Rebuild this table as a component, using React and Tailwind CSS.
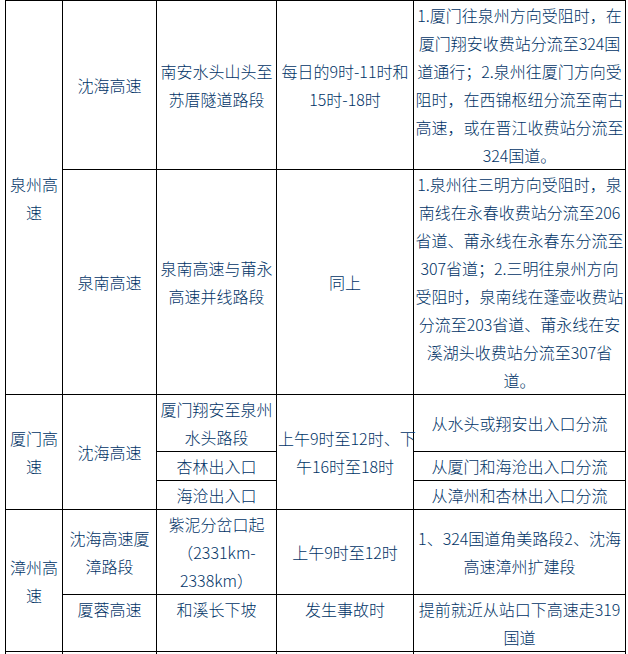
import React from "react";

const td =
  "border border-black px-px py-0 text-center align-middle leading-[28px]";
const tdTop =
  "border border-black px-px py-0 text-center align-top leading-[28px]";

function Lines({ lines }) {
  return (
    <>
      {lines.map((l, i) => (
        <div key={i} className="whitespace-nowrap">
          {l}
        </div>
      ))}
    </>
  );
}

export default function App() {
  return (
    <div className="bg-white w-[628px] h-[654px] overflow-hidden">
      <table
        className="ml-[5px] w-[620px] table-fixed border-collapse text-[16px] font-light text-[#003366]"
        style={{ fontFamily: '"Noto Sans CJK SC", sans-serif' }}
      >
        <colgroup>
          <col className="w-[57px]" />
          <col className="w-[94px]" />
          <col className="w-[120px]" />
          <col className="w-[137px]" />
          <col className="w-[212px]" />
        </colgroup>
        <tbody>
          <tr>
            <td className={td} rowSpan={2}>
              泉州高速
            </td>
            <td className={td}>沈海高速</td>
            <td className={td}>
              <Lines lines={["南安水头山头至", "苏厝隧道路段"]} />
            </td>
            <td className={td}>
              <Lines lines={["每日的9时-11时和", "15时-18时"]} />
            </td>
            <td className={td}>
              <Lines
                lines={[
                  "1.厦门往泉州方向受阻时，在",
                  "厦门翔安收费站分流至324国",
                  "道通行；2.泉州往厦门方向受",
                  "阻时，在西锦枢纽分流至南古",
                  "高速，或在晋江收费站分流至",
                  "324国道。",
                ]}
              />
            </td>
          </tr>
          <tr>
            <td className={td}>泉南高速</td>
            <td className={td}>
              <Lines lines={["泉南高速与莆永", "高速并线路段"]} />
            </td>
            <td className={td}>同上</td>
            <td className={td}>
              <Lines
                lines={[
                  "1.泉州往三明方向受阻时，泉",
                  "南线在永春收费站分流至206",
                  "省道、莆永线在永春东分流至",
                  "307省道；2.三明往泉州方向",
                  "受阻时，泉南线在蓬壶收费站",
                  "分流至203省道、莆永线在安",
                  "溪湖头收费站分流至307省",
                  "道。",
                ]}
              />
            </td>
          </tr>
          <tr>
            <td className={td} rowSpan={3}>
              厦门高速
            </td>
            <td className={td} rowSpan={3}>
              沈海高速
            </td>
            <td className={td}>
              <Lines lines={["厦门翔安至泉州", "水头路段"]} />
            </td>
            <td className={td} rowSpan={3}>
              <Lines lines={["上午9时至12时、下", "午16时至18时"]} />
            </td>
            <td className={td}>从水头或翔安出入口分流</td>
          </tr>
          <tr>
            <td className={td}>杏林出入口</td>
            <td className={td}>从厦门和海沧出入口分流</td>
          </tr>
          <tr>
            <td className={td}>海沧出入口</td>
            <td className={td}>从漳州和杏林出入口分流</td>
          </tr>
          <tr>
            <td className={td} rowSpan={2}>
              漳州高速
            </td>
            <td className={td}>
              <Lines lines={["沈海高速厦", "漳路段"]} />
            </td>
            <td className={td}>
              <Lines lines={["紫泥分岔口起", "（2331km-", "2338km）"]} />
            </td>
            <td className={td}>上午9时至12时</td>
            <td className={td}>
              <Lines lines={["1、324国道角美路段2、沈海", "高速漳州扩建段"]} />
            </td>
          </tr>
          <tr>
            <td className={tdTop}>厦蓉高速</td>
            <td className={tdTop}>和溪长下坡</td>
            <td className={tdTop}>发生事故时</td>
            <td className={td}>
              <Lines lines={["提前就近从站口下高速走319", "国道"]} />
            </td>
          </tr>
          <tr className="h-[56px]">
            <td className={td}></td>
            <td className={td}></td>
            <td className={td}></td>
            <td className={td}></td>
            <td className={td}></td>
          </tr>
        </tbody>
      </table>
    </div>
  );
}
